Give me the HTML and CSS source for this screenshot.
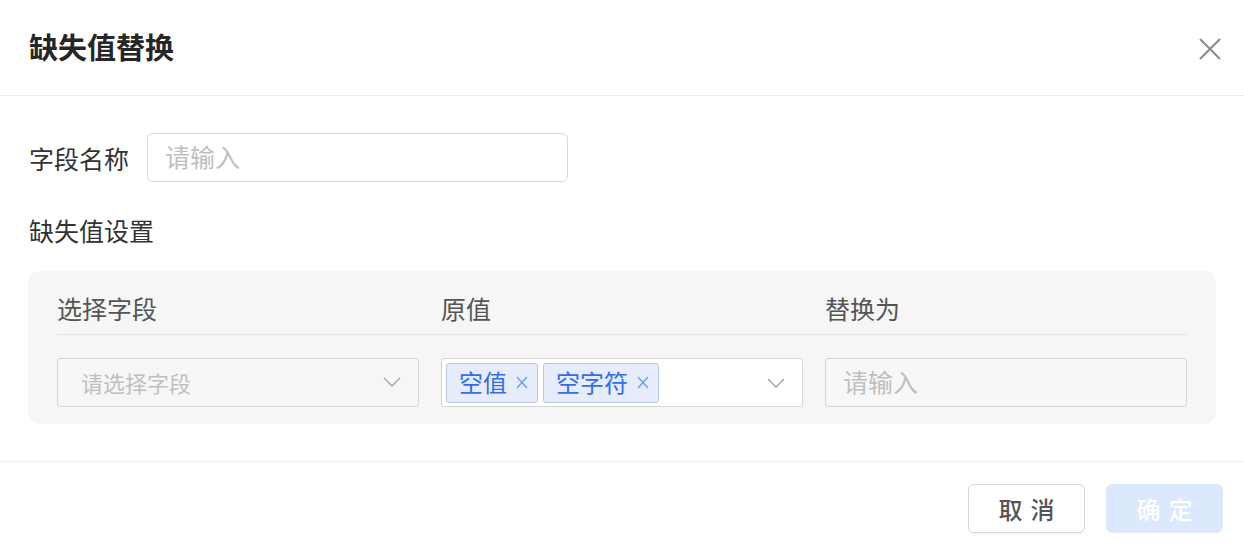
FILE: index.html
```html
<!DOCTYPE html>
<html lang="zh-CN">
<head>
<meta charset="utf-8">
<title>缺失值替换</title>
<link rel="stylesheet" href="styles.css">
</head>
<body>
<div class="modal">
  <div class="modal-header">
    <div class="modal-title">缺失值替换</div>
    <button class="close-btn" aria-label="关闭">
      <svg width="22" height="22" viewBox="0 0 22 22"><path d="M1 1L21 21M21 1L1 21" stroke="#8a8a8a" stroke-width="2" fill="none"/></svg>
    </button>
  </div>
  <div class="modal-body">
    <div class="form-row">
      <label class="form-label">字段名称</label>
      <div class="input name-input"><span class="placeholder">请输入</span></div>
    </div>
    <div class="section-title">缺失值设置</div>
    <div class="panel">
      <div class="panel-head">
        <div>选择字段</div>
        <div>原值</div>
        <div>替换为</div>
      </div>
      <div class="panel-row">
        <div class="select select-field">
          <span class="placeholder small">请选择字段</span>
          <svg class="chev" width="18" height="10" viewBox="0 0 18 10"><polyline points="1,1 9,9 17,1" stroke="#a8a8a8" stroke-width="1.5" fill="none"/></svg>
        </div>
        <div class="select select-tags">
          <div class="tags">
            <span class="tag">空值<svg class="tag-x" width="12" height="13" viewBox="0 0 12 13"><path d="M1 1L11 12M11 1L1 12" stroke="#6b9af8" stroke-width="1.3" fill="none"/></svg></span>
            <span class="tag">空字符<svg class="tag-x" width="12" height="13" viewBox="0 0 12 13"><path d="M1 1L11 12M11 1L1 12" stroke="#6b9af8" stroke-width="1.3" fill="none"/></svg></span>
          </div>
          <svg class="chev" width="18" height="10" viewBox="0 0 18 10"><polyline points="1,1 9,9 17,1" stroke="#a8a8a8" stroke-width="1.5" fill="none"/></svg>
        </div>
        <div class="input replace-input"><span class="placeholder">请输入</span></div>
      </div>
    </div>
  </div>
  <div class="modal-footer">
    <button class="btn btn-default">取消</button>
    <button class="btn btn-primary">确定</button>
  </div>
</div>
</body>
</html>
```
FILE: styles.css
```css
* { box-sizing: border-box; }
html, body {
  margin: 0;
  padding: 0;
  background: #fff;
  font-family: "Noto Sans CJK SC", "Noto Sans", sans-serif;
}
.modal {
  width: 1244px;
  height: 548px;
  overflow: hidden;
  background: #fff;
}
.modal-header {
  height: 96px;
  border-bottom: 1px solid #ececec;
  display: flex;
  align-items: center;
  justify-content: space-between;
  padding: 0 23px 3px 29px;
}
.modal-title {
  font-size: 29px;
  font-weight: 700;
  color: #262626;
  line-height: 40px;
}
.close-btn {
  border: none;
  background: none;
  padding: 0;
  width: 22px;
  height: 22px;
  display: flex;
  margin-top: 6px;
}
.modal-body {
  padding: 37px 28px 37px 28px;
}
.form-row {
  display: flex;
  align-items: center;
  gap: 18px;
  padding-left: 1px;
}
.form-label {
  font-size: 25px;
  color: #333;
  line-height: 36px;
}
.input {
  height: 49px;
  border: 1px solid #d9d9d9;
  border-radius: 6px;
  display: flex;
  align-items: center;
  padding-left: 17px;
  padding-bottom: 2px;
  background: #fff;
}
.name-input {
  width: 421px;
}
.placeholder {
  font-size: 25px;
  color: #bfbfbf;
  line-height: 1;
}
.placeholder.small {
  font-size: 22px;
}
.section-title {
  font-size: 25px;
  color: #333;
  line-height: 36px;
  margin-top: 30px;
  padding-left: 1px;
}
.panel {
  margin-top: 23px;
  background: #f6f6f6;
  border-radius: 12px;
  padding: 19px 29px 17px 29px;
}
.panel-head {
  display: grid;
  grid-template-columns: 362px 362px 362px;
  column-gap: 22px;
  font-size: 25px;
  color: #555;
  line-height: 36px;
  padding-bottom: 8px;
  border-bottom: 1px solid #e3e3e3;
}
.panel-row {
  display: grid;
  grid-template-columns: 362px 362px 362px;
  column-gap: 22px;
  margin-top: 23px;
}
.select {
  height: 49px;
  border: 1px solid #d4d4d4;
  border-radius: 3px;
  display: flex;
  align-items: center;
  justify-content: space-between;
  padding-right: 17px;
}
.select-field {
  background: #f6f6f6;
  padding-left: 23px;
  padding-bottom: 2px;
}
.select-tags {
  background: #fff;
  padding-left: 4px;
}
.replace-input {
  background: #f7f7f7;
  border-color: #d4d4d4;
  border-radius: 3px;
  height: 49px;
}
.tags {
  display: flex;
  gap: 5px;
}
.tag {
  height: 40px;
  display: inline-flex;
  align-items: center;
  padding: 0 9px 2px 12px;
  background: #e6ecfa;
  border: 1px solid #bcc8e2;
  border-radius: 3px;
  color: #2f6ef3;
  font-size: 24px;
  line-height: 1;
}
.tag-x {
  margin-left: 9px;
  margin-top: 2px;
}
.chev {
  flex: none;
}
.modal-footer {
  border-top: 1px solid #ececec;
  display: flex;
  justify-content: flex-end;
  gap: 21px;
  padding: 22px 21px 0 0;
}
.btn {
  width: 117px;
  height: 49px;
  border-radius: 6px;
  font-family: "Noto Sans CJK SC", "Noto Sans", sans-serif;
  font-size: 24px;
  font-weight: 500;
  letter-spacing: 8px;
  text-indent: 8px;
  padding: 0;
  display: flex;
  align-items: center;
  justify-content: center;
}
.btn-default {
  background: #fff;
  border: 1px solid #d6d6d6;
  color: #555;
  box-shadow: 0 2px 2px rgba(0, 0, 0, 0.04);
}
.btn-primary {
  background: #dce8fc;
  border: 1px solid #dce8fc;
  color: #fff;
}
```
